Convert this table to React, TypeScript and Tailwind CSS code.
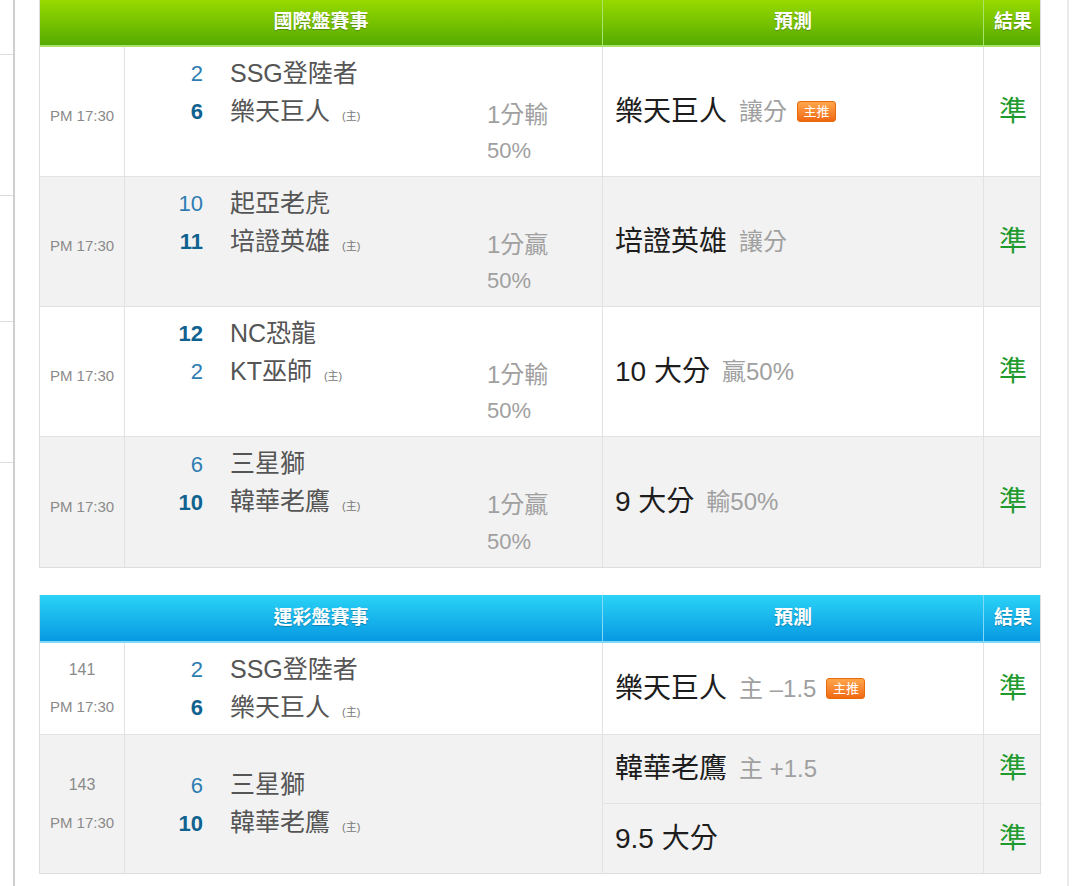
import React from "react";

const font = { fontFamily: '"Liberation Sans", "Noto Sans CJK TC", sans-serif' };

type Game = {
  time: string;
  away: [string, string, boolean];
  home: [string, string, boolean];
  line?: string;
};

const Badge = () => (
  <span className="ml-[10px] inline-flex h-[21px] w-[39px] items-center justify-center rounded-[3px] border border-[#e8690c] bg-linear-to-b from-[#ffa64a] to-[#f0680f] text-[13px] leading-none text-white">
    主推
  </span>
);

const Score = ({ v, win }: { v: string; win: boolean }) => (
  <div
    className={`pr-[1px] text-right text-[22px] ${
      win ? "font-bold text-[#0f628f]" : "text-[#2d7db3]"
    }`}
  >
    {v}
  </div>
);

const Teams = ({ g }: { g: Game }) => (
  <div className="flex items-center border-r border-[#e2e2e2]">
    <div className="grid w-full grid-cols-[79px_283px_116px] auto-rows-[38px] items-center">
      <Score v={g.away[0]} win={g.away[2]} />
      <div className="pl-[26px] text-[25px] text-[#555]">{g.away[1]}</div>
      <div />
      <Score v={g.home[0]} win={g.home[2]} />
      <div className="pl-[26px] text-[25px] text-[#555]">
        {g.home[1]}
        <span className="ml-[12px] text-[11px] text-[#777]">(主)</span>
      </div>
      <div className="pt-[6px] text-[24px] text-[#a0a0a0]">{g.line ? g.line.split("|")[0] : ""}</div>
      {g.line && (
        <>
          <div />
          <div />
          <div className="pt-[2px] text-[22px] text-[#a0a0a0]">{g.line.split("|")[1]}</div>
        </>
      )}
    </div>
  </div>
);

const Pick = ({ main, sub, hot }: { main: string; sub?: string; hot?: boolean }) => (
  <div className="flex items-center pl-[12px]">
    <span className="text-[28px] text-[#1d1d1d]">{main}</span>
    {sub && <span className="ml-[12px] text-[24px] text-[#a0a0a0]">{sub}</span>}
    {hot && <Badge />}
  </div>
);

const Hit = () => (
  <div className="flex items-center justify-center text-[28px] text-[#1f9a2e]">準</div>
);

const Header = ({ title, blue }: { title: string; blue?: boolean }) => (
  <div
    className={`grid grid-cols-[563px_381px_58px] text-[19px] font-bold text-white [text-shadow:0_1px_1px_rgba(0,0,0,0.25)] ${
      blue
        ? "h-[48px] border-b-2 border-[#7fd9f7] bg-linear-to-b from-[#2ad3f6] to-[#0899e2]"
        : "h-[47px] border-b-2 border-[#a9e36a] bg-linear-to-b from-[#97da00] to-[#56ab00]"
    }`}
  >
    <div className={`flex items-center justify-center border-r ${blue ? "border-[#7fd9f7]" : "border-[#a9e36a]"}`}>
      {title}
    </div>
    <div className={`flex items-center justify-center border-r ${blue ? "border-[#7fd9f7]" : "border-[#a9e36a]"}`}>
      預測
    </div>
    <div className="flex items-center justify-center">結果</div>
  </div>
);

const intl: { g: Game; main: string; sub: string; hot?: boolean }[] = [
  {
    g: { time: "PM 17:30", away: ["2", "SSG登陸者", false], home: ["6", "樂天巨人", true], line: "1分輸|50%" },
    main: "樂天巨人",
    sub: "讓分",
    hot: true,
  },
  {
    g: { time: "PM 17:30", away: ["10", "起亞老虎", false], home: ["11", "培證英雄", true], line: "1分贏|50%" },
    main: "培證英雄",
    sub: "讓分",
  },
  {
    g: { time: "PM 17:30", away: ["12", "NC恐龍", true], home: ["2", "KT巫師", false], line: "1分輸|50%" },
    main: "10 大分",
    sub: "贏50%",
  },
  {
    g: { time: "PM 17:30", away: ["6", "三星獅", false], home: ["10", "韓華老鷹", true], line: "1分贏|50%" },
    main: "9 大分",
    sub: "輸50%",
  },
];

export default function App() {
  return (
    <div className="flex min-h-[886px] w-[1080px] bg-white" style={font}>
      <div className="w-[15px] shrink-0 border-r-2 border-[#cfcfcf]">
        <div className="h-[55px] border-b border-[#dcdcdc]" />
        <div className="h-[141px] border-b border-[#dcdcdc]" />
        <div className="h-[126px] border-b border-[#dcdcdc]" />
        <div className="h-[141px] border-b border-[#dcdcdc]" />
      </div>

      <div className="ml-[24px] w-[1002px] shrink-0">
        <div className="border-x border-b border-[#dedede]">
          <Header title="國際盤賽事" />
          {intl.map((r, i) => (
            <div
              key={i}
              className={`grid h-[130px] grid-cols-[85px_478px_381px_58px] ${
                i < intl.length - 1 ? "border-b border-[#e2e2e2]" : ""
              } ${i % 2 ? "bg-[#f2f2f2]" : "bg-white"}`}
            >
              <div className="flex items-center justify-center border-r border-[#e2e2e2] pt-[10px] text-[15px] text-[#8a8a8a]">
                {r.g.time}
              </div>
              <Teams g={r.g} />
              <div className="flex border-r border-[#e2e2e2]">
                <Pick main={r.main} sub={r.sub} hot={r.hot} />
              </div>
              <Hit />
            </div>
          ))}
        </div>

        <div className="mt-[27px] border-x border-b border-[#dedede]">
          <Header title="運彩盤賽事" blue />
          <div className="grid h-[92px] grid-cols-[85px_478px_381px_58px] border-b border-[#e2e2e2] bg-white">
            <div className="flex flex-col items-center justify-center border-r border-[#e2e2e2] text-[#8a8a8a]">
              <div className="flex h-[38px] items-center text-[16px]">141</div>
              <div className="flex h-[38px] items-center text-[15px]">PM 17:30</div>
            </div>
            <Teams g={{ time: "", away: ["2", "SSG登陸者", false], home: ["6", "樂天巨人", true] }} />
            <div className="flex border-r border-[#e2e2e2]">
              <Pick main="樂天巨人" sub="主 –1.5" hot />
            </div>
            <Hit />
          </div>
          <div className="grid h-[138px] grid-cols-[85px_478px_381px_58px] bg-[#f2f2f2]">
            <div className="flex flex-col items-center justify-center border-r border-[#e2e2e2] text-[#8a8a8a]">
              <div className="flex h-[38px] items-center text-[16px]">143</div>
              <div className="flex h-[38px] items-center text-[15px]">PM 17:30</div>
            </div>
            <Teams g={{ time: "", away: ["6", "三星獅", false], home: ["10", "韓華老鷹", true] }} />
            <div className="col-span-2 grid grid-rows-2">
              <div className="grid grid-cols-[381px_58px] border-b border-[#e2e2e2]">
                <div className="flex border-r border-[#e2e2e2]">
                  <Pick main="韓華老鷹" sub="主 +1.5" />
                </div>
                <Hit />
              </div>
              <div className="grid grid-cols-[381px_58px]">
                <div className="flex border-r border-[#e2e2e2]">
                  <Pick main="9.5 大分" />
                </div>
                <Hit />
              </div>
            </div>
          </div>
        </div>
      </div>

      <div className="ml-[26px] w-[13px] shrink-0 border-l-2 border-[#ebebeb]" />
    </div>
  );
}
